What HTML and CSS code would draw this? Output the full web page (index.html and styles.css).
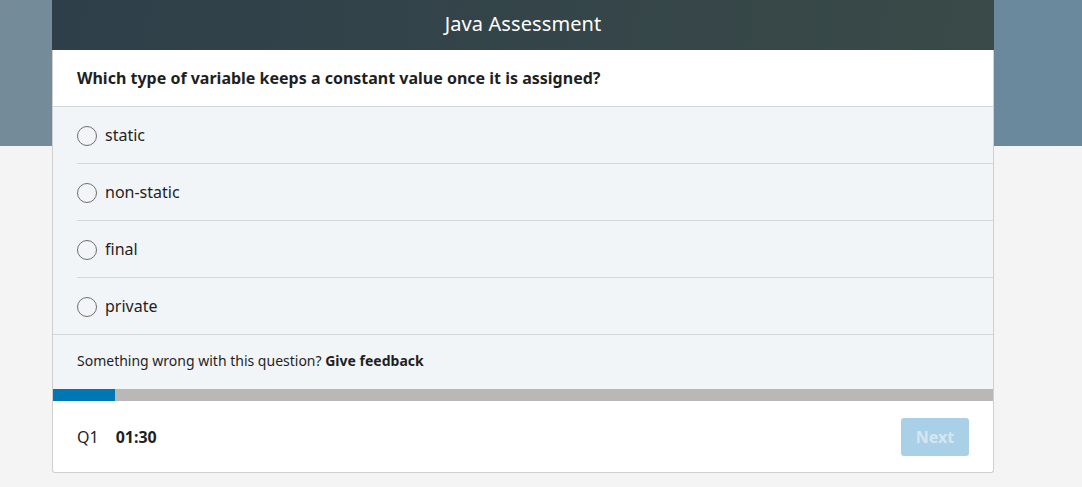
FILE: index.html
```html
<!DOCTYPE html>
<html>
<head>
<meta charset="utf-8">
<link rel="stylesheet" href="styles.css">
</head>
<body>
<div class="band"></div>
<div class="page">
  <div class="card">
    <div class="header">Java Assessment</div>
    <div class="question">Which type of variable keeps a constant value once it is assigned?</div>
    <ul class="options">
      <li class="option"><span class="radio"></span><span class="label">static</span></li>
      <li class="option"><span class="radio"></span><span class="label">non-static</span></li>
      <li class="option"><span class="radio"></span><span class="label">final</span></li>
      <li class="option last"><span class="radio"></span><span class="label">private</span></li>
    </ul>
    <div class="feedback">Something wrong with this question? <b>Give feedback</b></div>
    <div class="progress"><div class="progress-fill" style="width:62px"></div></div>
    <div class="footer">
      <span class="qnum">Q1</span>
      <span class="timer">01:30</span>
      <button class="next">Next</button>
    </div>
  </div>
</div>
</body>
</html>
```
FILE: styles.css
```css
html, body {
  margin: 0;
  padding: 0;
}
body {
  background: #f4f4f4;
  font-family: "Segoe UI", "Noto Sans", "Open Sans", sans-serif;
  color: #1f1f1f;
  position: relative;
  min-height: 487px;
}
.band {
  position: absolute;
  left: 0;
  top: 0;
  right: 0;
  height: 146px;
  background: linear-gradient(100deg, #758b9a 0%, #6a899d 100%);
}
.page {
  position: relative;
  display: flex;
  justify-content: center;
  padding-left: 52px;
  padding-right: 88px;
}
.card {
  width: 940px;
  border: 1px solid #cfcfcf;
  border-top: none;
  border-radius: 0 0 3px 3px;
  background: #fff;
  flex: none;
}
.header {
  height: 50px;
  margin: 0 -1px;
  background: linear-gradient(100deg, #2e3f4a 0%, #3a4a48 100%);
  color: #fff;
  font-size: 20px;
  letter-spacing: 0.1px;
  line-height: 48px;
  text-align: center;
}
.question {
  height: 57px;
  box-sizing: border-box;
  padding: 0 24px;
  font-size: 16px;
  font-weight: 700;
  line-height: 56px;
  border-bottom: 1px solid #d6d6d6;
}
.options {
  list-style: none;
  margin: 0;
  padding: 0;
  background: #f2f5f8;
}
.option {
  height: 57px;
  margin-left: 24px;
  box-sizing: border-box;
  border-bottom: 1px solid #d4d6d8;
  display: flex;
  align-items: center;
  font-size: 16px;
}
.option.last {
  margin-left: 0;
  padding-left: 24px;
}
.radio {
  width: 18px;
  height: 18px;
  border: 1px solid #6e6e6e;
  border-radius: 50%;
  margin-right: 8px;
  flex: none;
  margin-top: 1px;
}
.label {
  line-height: 20px;
}
.feedback {
  height: 54px;
  box-sizing: border-box;
  padding: 0 24px;
  background: #f2f5f8;
  font-size: 14px;
  line-height: 52px;
}
.feedback b {
  font-weight: 700;
}
.progress {
  height: 12px;
  background: #b9b8b7;
}
.progress-fill {
  height: 12px;
  background: #0077b5;
}
.footer {
  height: 71px;
  display: flex;
  align-items: center;
  padding: 0 24px;
  font-size: 16px;
}
.qnum {
  margin-right: 17px;
}
.timer {
  font-weight: 700;
}
.next {
  margin-left: auto;
  width: 68px;
  height: 38px;
  border: none;
  border-radius: 3px;
  background: #a9d0e7;
  color: #d3e7f3;
  font-family: inherit;
  font-size: 16px;
  font-weight: 700;
  padding: 0;
}
```
